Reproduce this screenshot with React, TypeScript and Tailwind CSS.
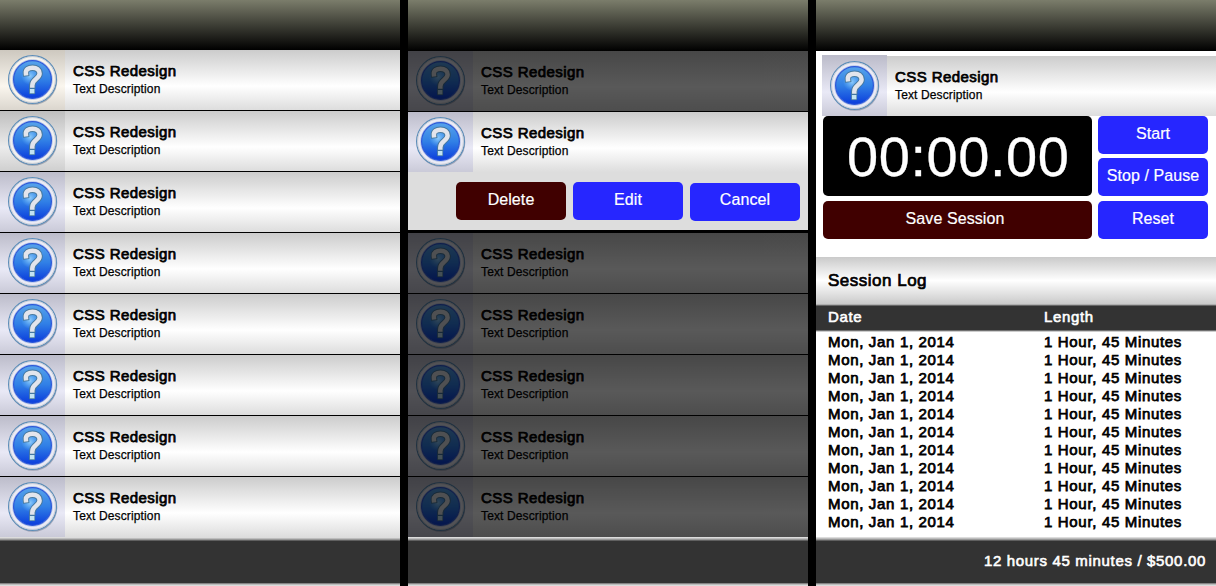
import React from "react";

type Tint = "warm" | "gray" | "lavender";

const tints: Record<Tint, string> = {
  warm: "bg-linear-to-b/srgb from-[#cdc8bf] via-[#faf6ee] via-60% to-[#dbd6ce]",
  gray: "bg-linear-to-b/srgb from-[#bebebe] via-[#ececec] via-60% to-[#cfcfcf]",
  lavender: "bg-linear-to-b/srgb from-[#bcbcca] via-[#e9e9f6] via-60% to-[#cacad8]",
};

const ringColors: Record<Tint, string> = { warm: "#f6f3ec", gray: "#f0f0f0", lavender: "#ebebf5" };

const mark = "M25.9 23.2 C25.5 19.6 28.4 17.7 32.5 17.7 C36.8 17.7 39.6 19.9 39.6 23.6 C39.6 29 32.3 28.6 32.3 35.4";

function HelpIcon({ id, tint }: { id: string; tint: Tint }) {
  return (
    <svg width="65" height="60" viewBox="0 0 65 60" className="block">
      <defs>
        <linearGradient id={`${id}-disc`} x1="0" y1="0" x2="0" y2="1">
          <stop offset="0" stopColor="#57a3ea" />
          <stop offset="0.5" stopColor="#3180e6" />
          <stop offset="1" stopColor="#0a3cdc" />
        </linearGradient>
        <linearGradient id={`${id}-mark`} x1="0" y1="14" x2="0" y2="38" gradientUnits="userSpaceOnUse">
          <stop offset="0" stopColor="#e4e5ec" />
          <stop offset="1" stopColor="#e0e4ec" />
        </linearGradient>
        <radialGradient id={`${id}-glow`}>
          <stop offset="0" stopColor="#a5dcff" stopOpacity="0.8" />
          <stop offset="1" stopColor="#6fc0ff" stopOpacity="0" />
        </radialGradient>
      </defs>
      <circle cx="33.1" cy="30.6" r="24.2" fill="#5d6880" opacity="0.45" />
      <circle cx="32.5" cy="29.5" r="23.9" fill={ringColors[tint]} stroke="#5c8db8" strokeWidth="1.2" />
      <circle cx="32.5" cy="29.5" r="22.9" fill="none" stroke="#c6c9d2" strokeWidth="1" opacity="0.8" />
      <circle cx="32.5" cy="29.5" r="19.8" fill="none" stroke="#b3c3ea" strokeWidth="1" />
      <circle cx="32.5" cy="29.5" r="18.9" fill={`url(#${id}-disc)`} stroke="#2d58d8" strokeWidth="1.2" />
      <circle cx="30" cy="26" r="9" fill={`url(#${id}-glow)`} />
      <g fill="none" stroke="#47799f" strokeWidth="6.4">
        <path d={mark} strokeLinecap="square" />
        <path d="M29.1 41.1H35.1" strokeWidth="6" />
      </g>
      <path d={mark} fill="none" stroke={`url(#${id}-mark)`} strokeWidth="4.5" strokeLinecap="square" />
      <path d="M29.9 39H34.4V43.3H29.9Z" fill="#c3e3f2" />
    </svg>
  );
}

function Row({ id, tint = "lavender" }: { id: string; tint?: Tint }) {
  return (
    <div className="flex h-[60px] shrink-0 bg-linear-to-b/srgb from-[#cccccc] via-white via-60% to-[#dddddd]">
      <div className={`w-[65px] shrink-0 ${tints[tint]}`}>
        <HelpIcon id={id} tint={tint} />
      </div>
      <div className="pl-2 pt-3">
        <div className="text-[15px] leading-[18px] tracking-[0.42px] [-webkit-text-stroke:0.75px_#000]">CSS Redesign</div>
        <div className="text-[12px] leading-[18px] tracking-[0.13px] [-webkit-text-stroke:0.25px_#000]">Text Description</div>
      </div>
    </div>
  );
}

function Header({ className }: { className: string }) {
  return <div className={`shrink-0 bg-linear-to-b/srgb from-[#7b7d6b] to-black ${className}`} />;
}

function Footer({ children }: { children?: React.ReactNode }) {
  return (
    <div className="flex h-[49px] shrink-0 flex-col">
      <div className="h-px bg-[#dcdcdc]" />
      <div className="h-px bg-[#bdbdbd]" />
      <div className="h-px bg-[#989898]" />
      <div className="h-px bg-[#606060]" />
      <div className="flex h-[42px] justify-end bg-[#333333] pr-[10px] pt-[11px] text-[15px] leading-[18px] tracking-[0.67px] text-white [-webkit-text-stroke:0.6px_#fff]">
        {children}
      </div>
      <div className="h-px bg-[#858585]" />
      <div className="h-px bg-[#bdbdbd]" />
      <div className="h-px bg-[#dcdcdc]" />
    </div>
  );
}

function Button({ label, className }: { label: string; className: string }) {
  return (
    <button className={`flex h-[38px] shrink-0 justify-center rounded-[5px] text-[16px] tracking-[0.08px] text-white [-webkit-text-stroke:0.2px_#fff] ${className}`}>
      {label}
    </button>
  );
}

const sessions = Array.from({ length: 11 }, () => ({ date: "Mon, Jan 1, 2014", length: "1 Hour, 45 Minutes" }));

function ListPanel() {
  const rows: Tint[] = ["warm", "gray", "lavender", "lavender", "lavender", "lavender", "lavender", "lavender"];
  return (
    <section className="flex w-[400px] flex-col">
      <Header className="h-[50px]" />
      <div className="flex flex-col gap-px">
        {rows.map((tint, i) => (
          <Row key={i} id={`list${i}`} tint={tint} />
        ))}
      </div>
      <Footer />
    </section>
  );
}

function ActionPanel() {
  return (
    <section className="flex w-[400px] flex-col">
      <Header className="h-[51px]" />
      <div className="opacity-35">
        <Row id="dim0" />
      </div>
      <div className="mt-px h-[118px] bg-[#dddddd]">
        <Row id="active" />
        <div className="flex justify-end gap-[7px] pr-2 pt-[10px]">
          <Button label="Delete" className="w-[110px] bg-[#400000] leading-[36px]" />
          <Button label="Edit" className="w-[110px] bg-[#2626ff] leading-[36px]" />
          <Button label="Cancel" className="mt-px w-[110px] bg-[#2626ff] leading-[34px]" />
        </div>
      </div>
      <div className="mt-[3px] flex flex-col gap-px opacity-35">
        {[1, 2, 3, 4, 5].map((n) => (
          <Row key={n} id={`dim${n}`} />
        ))}
      </div>
      <Footer />
    </section>
  );
}

function TimerPanel() {
  return (
    <section className="flex w-[400px] flex-col bg-white">
      <Header className="h-[51px]" />
      <div className="h-[65px] pl-[6px] pt-1">
        <div className="h-px w-[65px] bg-[#bcbcca]" />
        <Row id="timer" />
      </div>
      <div className="flex h-[141px] gap-[6px] pl-[7px]">
        <div className="w-[269px]">
          <div className="h-20 rounded-[5px] bg-black pl-[24px] text-[56px] leading-[81px] tracking-[0.55px] whitespace-nowrap text-white [-webkit-text-stroke:0.3px_#fff]">
            00:00.00
          </div>
          <Button label="Save Session" className="mt-[5px] w-full bg-[#400000] pr-[5px] leading-[36px]" />
        </div>
        <div className="w-[110px]">
          <Button label="Start" className="w-full bg-[#2626ff] leading-[36px]" />
          <Button label="Stop / Pause" className="mt-1 w-full bg-[#2626ff] leading-[36px]" />
          <Button label="Reset" className="mt-[5px] w-full bg-[#2626ff] leading-[36px]" />
        </div>
      </div>
      <div className="h-[47px] bg-linear-to-b/srgb from-[#cacaca] via-white to-[#cacaca] pl-[12px] text-[17px] leading-[47px] tracking-[0.5px] [-webkit-text-stroke:0.7px_#000]">
        Session Log
      </div>
      <div className="h-px bg-[#b0b0b0]" />
      <div className="h-px bg-[#666666]" />
      <div className="flex h-6 bg-[#333333] pl-3 text-[15px] leading-[22px] tracking-[0.66px] text-white [-webkit-text-stroke:0.6px_#fff]">
        <div className="w-[216px]">Date</div>
        <div>Length</div>
      </div>
      <div className="h-px bg-[#707070]" />
      <div className="h-px bg-[#cccccc]" />
      <div className="h-[205px] pl-3 pt-[1px] text-[15px] leading-[18px] tracking-[0.67px] [-webkit-text-stroke:0.75px_#000]">
        {sessions.map((s, i) => (
          <div key={i} className="flex">
            <div className="w-[216px]">{s.date}</div>
            <div>{s.length}</div>
          </div>
        ))}
      </div>
      <Footer>12 hours 45 minutes / $500.00</Footer>
    </section>
  );
}

export default function App() {
  return (
    <main className="flex h-[586px] w-[1216px] gap-2 overflow-hidden bg-black font-['Liberation_Sans',Arial,sans-serif] text-black">
      <ListPanel />
      <ActionPanel />
      <TimerPanel />
    </main>
  );
}
